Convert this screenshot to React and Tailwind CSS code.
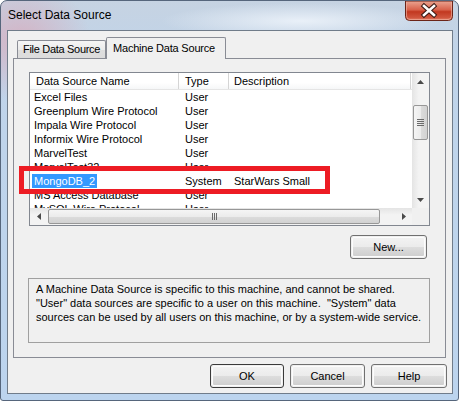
import React from "react";

const rows = [
  ["Excel Files", "User", ""],
  ["Greenplum Wire Protocol", "User", ""],
  ["Impala Wire Protocol", "User", ""],
  ["Informix Wire Protocol", "User", ""],
  ["MarvelTest", "User", ""],
  ["MarvelTest32", "User", ""],
  ["MongoDB_2", "System", "StarWars Small"],
  ["MS Access Database", "User", ""],
  ["MySQL Wire Protocol", "User", ""],
];

function Arrow({ dir }) {
  const pts = {
    up: "0,4 3.5,0 7,4",
    down: "0,0 3.5,4 7,0",
    left: "4,0 0,3.5 4,7",
    right: "0,0 4,3.5 0,7",
  }[dir];
  const vert = dir === "up" || dir === "down";
  return (
    <svg width={vert ? 7 : 4} height={vert ? 4 : 7} viewBox={vert ? "0 0 7 4" : "0 0 4 7"}>
      <polygon points={pts} fill="#4a4a4a" />
    </svg>
  );
}

function CloseButton() {
  return (
    <svg width="48" height="20" viewBox="0 0 48 20" className="block">
      <defs>
        <linearGradient id="cbg" x1="0" y1="0" x2="0" y2="1">
          <stop offset="0" stopColor="#eba592" />
          <stop offset="0.45" stopColor="#d8624b" />
          <stop offset="0.55" stopColor="#c23820" />
          <stop offset="0.85" stopColor="#d0553d" />
          <stop offset="1" stopColor="#e4866e" />
        </linearGradient>
      </defs>
      <path d="M0.5 0 V15.5 Q0.5 19.5 4.5 19.5 H43.5 Q47.5 19.5 47.5 15.5 V0 Z" fill="url(#cbg)" stroke="#6b2418" strokeWidth="1" />
      <path d="M1.5 1 V15 Q1.5 18.5 5 18.5 H43 Q46.5 18.5 46.5 15 V1" fill="none" stroke="#f2b7a8" strokeOpacity="0.6" strokeWidth="1" />
      <path d="M19 5 L29 14 M29 5 L19 14" stroke="#3b1a14" strokeWidth="4.6" strokeLinecap="square" />
      <path d="M19 5 L29 14 M29 5 L19 14" stroke="#ffffff" strokeWidth="2.6" strokeLinecap="square" />
    </svg>
  );
}

function Btn({ children, w, def }) {
  return (
    <div
      className={`h-[24px] ${w} rounded-[3px] border ${def ? "border-[#3a3a3a]" : "border-[#707070]"} p-px`}
    >
      <div className="h-full w-full rounded-[2px] border border-[#fcfcfc] bg-[linear-gradient(180deg,#f2f2f2_0%,#ebebeb_50%,#dddddd_51%,#cfcfcf_100%)] flex items-center justify-center text-black leading-none">
        {children}
      </div>
    </div>
  );
}

export default function App() {
  return (
    <div className="w-[461px] h-[404px] overflow-hidden bg-white font-['Liberation_Sans',Arial,sans-serif] text-[11px] text-black">
      <div className="w-[459px] h-[401px] rounded-t-[7px] rounded-b-[3px] border border-[#56667c] flex flex-col bg-[radial-gradient(ellipse_70px_60px_at_20px_40px,#d4b3c4_0%,rgba(212,179,196,0)_100%),radial-gradient(ellipse_140px_18px_at_300px_20px,#e9f0f8_0%,rgba(233,240,248,0)_100%),linear-gradient(180deg,#c6d3e2_0%,#c0d4ea_15%,#bcd4ee_100%)]">
        {/* title bar */}
        <div className="h-[29px] flex items-start justify-between">
          <div className="pl-[7px] pt-[7px] text-[12px] leading-[15px] text-black">Select Data Source</div>
          <div className="mr-[5px]">
            <CloseButton />
          </div>
        </div>

        {/* client */}
        <div className="ml-[6px] w-[446px] h-[364px] border border-[#707c8a] bg-[#f0f0f0] flex flex-col">
          {/* tabs */}
          <div className="pt-[5px] pl-[9px] h-[27px] flex items-end">
            <div className="w-[89px] h-[18px] border border-b-0 border-[#898c95] rounded-t-[2px] bg-[linear-gradient(180deg,#f5f5f5_0%,#ebebeb_50%,#dedede_51%,#dcdcdc_100%)] flex items-center pl-[5px] leading-none tracking-[-0.3px] whitespace-nowrap">
              File Data Source
            </div>
            <div className="relative z-10 -mb-px w-[120px] h-[22px] border border-b-0 border-[#898c95] rounded-t-[2px] bg-[#f0f0f0] flex items-start pt-[4px] pl-[6px] leading-[12px] tracking-[-0.2px] whitespace-nowrap">
              Machine Data Source
            </div>
          </div>

          {/* panel */}
          <div className="ml-[5px] w-[433px] h-[300px] border border-[#898c95] bg-[#f0f0f0] pl-[15px] pt-[13px] flex flex-col">
            {/* list view */}
            <div className="w-[401px] h-[154px] border border-[#828790] bg-white grid grid-cols-[1fr_17px] grid-rows-[1fr_17px]">
              <div className="overflow-hidden">
                <div className="h-[17px] flex border-b border-[#e5e5e5] bg-[linear-gradient(180deg,#ffffff_0%,#ffffff_60%,#f6f7f8_100%)]">
                  <div className="w-[148px] pl-[6px] flex items-center leading-none">Data Source Name</div>
                  <div className="w-[50px] border-l border-[#d5d5d5] pl-[6px] flex items-center leading-none">Type</div>
                  <div className="w-[183px] border-l border-r border-[#d5d5d5] pl-[5px] flex items-center leading-none">Description</div>
                </div>
                {rows.map(([n, t, d], i) => (
                  <div key={i} className="h-[14px] flex leading-[14px]">
                    <div className="w-[148px] pl-[2px] whitespace-nowrap">
                      {i === 6 ? (
                        <span className="inline-block px-[2px] bg-[#3399ff] text-white">{n}</span>
                      ) : (
                        <span className="px-[2px]">{n}</span>
                      )}
                    </div>
                    <div className="w-[50px] pl-[7px]">{t}</div>
                    <div className="pl-[6px] whitespace-nowrap">{d}</div>
                  </div>
                ))}
              </div>

              {/* vertical scrollbar */}
              <div className="flex flex-col bg-[linear-gradient(90deg,#e4e4e4_0%,#f3f3f3_40%,#f3f3f3_100%)]">
                <div className="h-[17px] flex items-center justify-center">
                  <Arrow dir="up" />
                </div>
                <div className="mt-[15px] mx-px h-[35px] rounded-[2px] border border-[#979797] bg-[linear-gradient(90deg,#f5f5f5_0%,#ececec_50%,#dcdcdc_51%,#d2d2d2_100%)] flex flex-col items-center justify-center gap-px">
                  <div className="w-[7px] h-px bg-[#6a6a6a]" />
                  <div className="w-[7px] h-px bg-[#6a6a6a]" />
                  <div className="w-[7px] h-px bg-[#6a6a6a]" />
                  <div className="w-[7px] h-px bg-[#6a6a6a]" />
                </div>
                <div className="flex-1" />
                <div className="h-[17px] flex items-center justify-center">
                  <Arrow dir="down" />
                </div>
              </div>

              {/* horizontal scrollbar */}
              <div className="flex bg-[linear-gradient(180deg,#e4e4e4_0%,#f3f3f3_40%,#f3f3f3_100%)]">
                <div className="w-[17px] flex items-center justify-center">
                  <Arrow dir="left" />
                </div>
                <div className="ml-px my-px w-[332px] rounded-[2px] border border-[#979797] bg-[linear-gradient(180deg,#f5f5f5_0%,#ececec_50%,#dcdcdc_51%,#d2d2d2_100%)] flex items-center justify-center gap-px">
                  <div className="h-[7px] w-px bg-[#6a6a6a]" />
                  <div className="h-[7px] w-px bg-[#6a6a6a]" />
                  <div className="h-[7px] w-px bg-[#6a6a6a]" />
                </div>
                <div className="flex-1" />
                <div className="w-[17px] flex items-center justify-center">
                  <Arrow dir="right" />
                </div>
              </div>
              <div className="bg-[#f0f0f0]" />
            </div>

            {/* New button */}
            <div className="w-[401px] mt-[9px] pr-[3px] flex justify-end">
              <Btn w="w-[77px]">New...</Btn>
            </div>

            {/* info box */}
            <div className="-ml-px mt-[19px] w-[402px] h-[65px] border border-[#a0a0a0] pl-[7px] pt-[3px] leading-[14px]">
              <div>A Machine Data Source is specific to this machine, and cannot be shared.</div>
              <div>"User" data sources are specific to a user on this machine.&nbsp; "System" data</div>
              <div>sources can be used by all users on this machine, or by a system-wide service.</div>
            </div>
          </div>

          {/* bottom buttons */}
          <div className="mt-[6px] pr-[5px] flex justify-end gap-[6px]">
            <Btn w="w-[74px]" def>OK</Btn>
            <Btn w="w-[75px]">Cancel</Btn>
            <Btn w="w-[76px]">Help</Btn>
          </div>
        </div>
      </div>

      {/* red highlight annotation */}
      <div className="absolute left-[19px] top-[166px] w-[311px] h-[28px] border-[5px] border-[#ed1c24] pointer-events-none" />
    </div>
  );
}
